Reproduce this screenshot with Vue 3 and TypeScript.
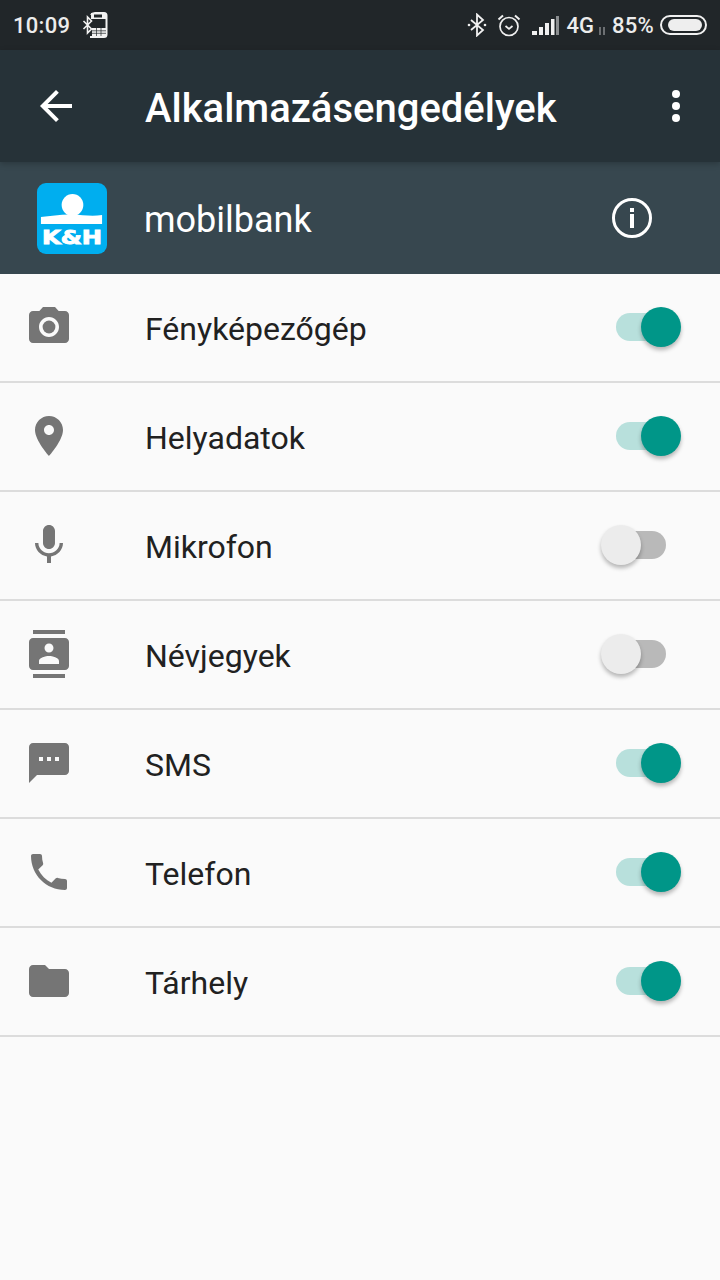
<script setup lang="ts">
interface Perm { label: string; on: boolean; icon: string; extra?: boolean }
const perms: Perm[] = [
  { label: 'Fényképezőgép', on: true, extra: true, icon: 'M9 2L7.17 4H4c-1.1 0-2 .9-2 2v12c0 1.1.9 2 2 2h16c1.1 0 2-.9 2-2V6c0-1.1-.9-2-2-2h-3.17L15 2H9zm3 15c-2.76 0-5-2.24-5-5s2.24-5 5-5 5 2.24 5 5-2.24 5-5 5z' },
  { label: 'Helyadatok', on: true, icon: 'M12 2C8.13 2 5 5.13 5 9c0 5.25 7 13 7 13s7-7.75 7-13c0-3.87-3.13-7-7-7zm0 9.5c-1.38 0-2.5-1.12-2.5-2.5s1.12-2.5 2.5-2.5 2.5 1.12 2.5 2.5-1.12 2.5-2.5 2.5z' },
  { label: 'Mikrofon', on: false, icon: 'M12 14c1.66 0 2.99-1.34 2.99-3L15 5c0-1.66-1.34-3-3-3S9 3.34 9 5v6c0 1.66 1.34 3 3 3zm5.3-3c0 3-2.54 5.1-5.3 5.1S6.7 14 6.7 11H5c0 3.41 2.72 6.23 6 6.72V21h2v-3.28c3.28-.48 6-3.3 6-6.72h-1.7z' },
  { label: 'Névjegyek', on: false, icon: 'M20 0H4v2h16V0zM4 24h16v-2H4v2zM20 4H4c-1.1 0-2 .9-2 2v12c0 1.1.9 2 2 2h16c1.1 0 2-.9 2-2V6c0-1.1-.9-2-2-2zm-8 2.75c1.24 0 2.25 1.01 2.25 2.25s-1.01 2.25-2.25 2.25S9.75 10.24 9.75 9 10.76 6.75 12 6.75zM17 17H7v-1.5c0-1.67 3.33-2.5 5-2.5s5 .83 5 2.5V17z' },
  { label: 'SMS', on: true, icon: 'M20 2H4c-1.1 0-1.99.9-1.99 2L2 22l4-4h14c1.1 0 2-.9 2-2V4c0-1.1-.9-2-2-2zM9 11H7V9h2v2zm4 0h-2V9h2v2zm4 0h-2V9h2v2z' },
  { label: 'Telefon', on: true, icon: 'M6.62 10.79c1.44 2.83 3.76 5.14 6.59 6.59l2.2-2.2c.27-.27.67-.36 1.02-.24 1.12.37 2.33.57 3.57.57.55 0 1 .45 1 1V20c0 .55-.45 1-1 1-9.39 0-17-7.61-17-17 0-.55.45-1 1-1h3.5c.55 0 1 .45 1 1 0 1.25.2 2.45.57 3.57.11.35.03.74-.25 1.02l-2.2 2.2z' },
  { label: 'Tárhely', on: true, icon: 'M10 4H4c-1.1 0-1.99.9-1.99 2L2 18c0 1.1.9 2 2 2h16c1.1 0 2-.9 2-2V8c0-1.1-.9-2-2-2h-8l-2-2z' },
]
</script>

<template>
  <div class="page">
    <div class="status">
      <span class="time">10:09</span>
      <svg class="bt-phone" width="26" height="26" viewBox="0 0 26 26" fill="none" stroke="#f2f2f2" stroke-width="1.600">
        <path d="M1.500 9l8 8-4 4V5l4 4-8 8" />
        <path d="M9 3Q10 1 13 1H22Q24.500 1 24.500 3.500V22.500Q24.500 25 22 25H8" stroke-width="2" />
        <rect x="9" y="1" width="15" height="6" fill="#f2f2f2" stroke="none" />
        <rect x="12" y="2.500" width="8" height="3" fill="#212629" stroke="none" />
        <rect x="10" y="16" width="14" height="8" fill="#f2f2f2" stroke="none" />
        <path d="M10 18.800h14M10 21.300h14M14.500 16v8M19 16v8" stroke="#212629" stroke-width=".7" />
      </svg>
      <span class="spacer"></span>
      <svg width="20" height="24" viewBox="0 0 20 24" fill="none" stroke="#f0f0f0" stroke-width="1.800" class="bt">
        <path d="M4 7l12 10-6 5.500V1.500L16 7 4 17" />
        <circle cx="2" cy="12" r="1.300" fill="#f0f0f0" stroke="none" />
        <circle cx="18" cy="12" r="1.300" fill="#f0f0f0" stroke="none" />
      </svg>
      <svg width="24" height="24" viewBox="0 0 24 24" fill="none" stroke="#f0f0f0" stroke-width="1.700" class="alarm">
        <circle cx="12" cy="13.500" r="9" />
        <path d="M8.500 13l3.500 3 3.500-3" />
        <path d="M1.500 6.500L6 2.500M22.500 6.500L18 2.500" stroke-width="2" />
      </svg>
      <svg width="28" height="19" viewBox="0 0 28 19" class="signal">
        <rect x="0" y="15" width="5" height="4" fill="#f0f0f0" />
        <rect x="7" y="11" width="4" height="8" fill="#f0f0f0" />
        <rect x="13" y="7" width="4" height="12" fill="#f0f0f0" />
        <rect x="19" y="3" width="3.500" height="16" fill="#f0f0f0" />
        <rect x="24" y="0" width="3" height="19" fill="#8a8d8f" />
      </svg>
      <span class="net">4G</span>
      <svg width="8" height="8" viewBox="0 0 8 8" class="arrows">
        <path d="M2 0v8M6 0v8" stroke="#85888a" stroke-width="1.500" />
      </svg>
      <span class="pct">85%</span>
      <div class="battery"><div class="battery-fill"></div></div>
    </div>

    <div class="toolbar">
      <svg class="back" width="48" height="48" viewBox="0 0 24 24" fill="#fff">
        <path d="M20 11H7.830l5.590-5.590L12 4l-8 8 8 8 1.410-1.410L7.830 13H20v-2z" />
      </svg>
      <h1 class="title">Alkalmazásengedélyek</h1>
      <div class="dots"><i></i><i></i><i></i></div>
    </div>

    <div class="app-head">
      <svg class="logo" width="70" height="71" viewBox="0 0 71 71" preserveAspectRatio="none">
        <rect width="71" height="71" rx="9" fill="#00aeef" />
        <circle cx="36" cy="22" r="11" fill="#fff" />
        <path d="M4 34c10-1 22-3 32-2.500 10 .5 20 2 30 .5v9H4z" fill="#fff" />
        <text x="35.500" y="61" class="logo-text" textLength="61" lengthAdjust="spacingAndGlyphs">K&amp;H</text>
      </svg>
      <span class="app-name">mobilbank</span>
      <svg class="info" width="48" height="48" viewBox="0 0 48 48">
        <circle cx="24" cy="24" r="18.500" fill="none" stroke="#fff" stroke-width="3" />
        <rect x="22" y="14" width="4" height="4" fill="#fff" />
        <rect x="22" y="20" width="4" height="14" fill="#fff" />
      </svg>
    </div>

    <div class="list">
      <div v-for="p in perms" :key="p.label" class="row">
        <svg class="row-icon" width="48" height="48" viewBox="0 0 24 24" fill="#757575">
          <path :d="p.icon" fill-rule="evenodd" />
          <circle v-if="p.extra" cx="12" cy="12" r="3.200" />
        </svg>
        <span class="label">{{ p.label }}</span>
        <div class="switch" :class="{ on: p.on }">
          <div class="track"></div>
          <div class="thumb"></div>
        </div>
      </div>
    </div>
  </div>
</template>

<style>
html, body { margin: 0; background: #fafafa; }
</style>

<style scoped>
.page {
  width: 720px;
  height: 1280px;
  overflow: hidden;
  background: #fafafa;
  font-family: Roboto, "Liberation Sans", sans-serif;
  display: flex;
  flex-direction: column;
}
.status {
  height: 50px;
  flex: none;
  background: #212629;
  display: flex;
  align-items: center;
  color: #ececec;
  padding-left: 13px;
  padding-right: 13px;
  box-sizing: border-box;
  font-weight: 500;
  font-size: 22px;
}
.time { letter-spacing: 0.3px; }
.bt-phone { margin-left: 12px; }
.spacer { flex: 1; }
.bt { margin-right: 10px; }
.alarm { margin-right: 11px; }
.signal { margin-right: 6px; }
.net { font-size: 22px; }
.arrows { margin: 11px 6px 0 4px; }
.pct { letter-spacing: 0.3px; margin-right: 6px; }
.battery {
  width: 47px;
  height: 20px;
  border: 2px solid #f0f0f0;
  border-radius: 10px;
  padding: 2px 3px;
  box-sizing: border-box;
  display: flex;
  justify-content: flex-end;
}
.battery-fill {
  width: 34px;
  height: 12px;
  background: #eeeeee;
  border-radius: 6px;
}
.toolbar {
  height: 112px;
  flex: none;
  background: #263238;
  display: flex;
  align-items: center;
  position: relative;
  z-index: 2;
  box-shadow: 0 2px 6px rgba(0, 0, 0, 0.22);
  color: #fff;
}
.back { margin-left: 32px; }
.title {
  margin: 4px 0 0 65px;
  font-size: 40px;
  font-weight: 500;
  flex: 1;
}
.dots {
  display: flex;
  flex-direction: column;
  gap: 4px;
  margin-right: 40px;
}
.dots i {
  display: block;
  width: 8px;
  height: 8px;
  border-radius: 50%;
  background: #fff;
}
.app-head {
  height: 112px;
  flex: none;
  background: #37474f;
  display: flex;
  align-items: center;
  color: #fff;
}
.logo { margin-left: 37px; flex: none; }
.logo-text {
  font-family: "DejaVu Sans", sans-serif;
  font-weight: 700;
  font-size: 19px;
  text-anchor: middle;
  fill: #fff;
  stroke: #fff;
  stroke-width: 0.9px;
}
.app-name {
  margin-left: 37px;
  margin-top: 3px;
  font-size: 36px;
  flex: 1;
}
.info { margin-right: 64px; }
.list { display: flex; flex-direction: column; }
.row {
  height: 109px;
  box-sizing: border-box;
  border-bottom: 2px solid #dcdcdc;
  display: flex;
  align-items: center;
  padding-left: 25px;
  padding-bottom: 1px;
}
.row-icon { flex: none; }
.label {
  margin-left: 72px;
  margin-top: 3px;
  font-size: 32px;
  color: #212121;
  flex: 1;
}
.switch {
  position: relative;
  width: 80px;
  height: 40px;
  margin-right: 39px;
  flex: none;
}
.track {
  position: absolute;
  left: 15px;
  top: 6px;
  width: 50px;
  height: 28px;
  border-radius: 14px;
  background: #b9b9b9;
}
.thumb {
  position: absolute;
  left: 0;
  top: 0;
  width: 40px;
  height: 40px;
  border-radius: 50%;
  background: #ececec;
  box-shadow: 0 3px 4px rgba(0, 0, 0, 0.28);
}
.switch.on .track { background: #b8e0dc; }
.switch.on .thumb {
  left: 40px;
  background: #009688;
}
</style>
